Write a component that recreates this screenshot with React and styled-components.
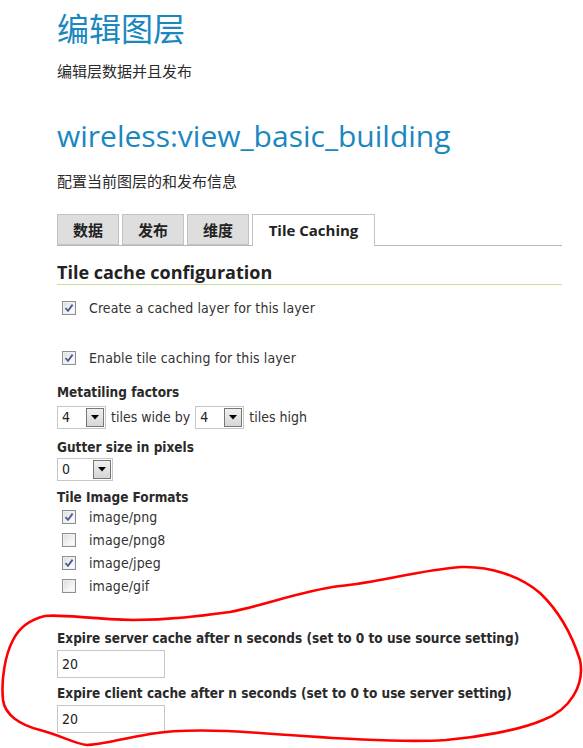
import React from 'react';
import styled, { createGlobalStyle } from 'styled-components';

const GlobalStyle = createGlobalStyle`
  html, body { margin: 0; padding: 0; background: #fff; }
  body {
    font-family: "DejaVu Sans Condensed", "DejaVu Sans", "Noto Sans CJK SC", sans-serif;
    color: #333;
  }
`;

const Page = styled.div`
  position: relative;
  width: 583px;
  height: 748px;
  overflow: hidden;
  box-sizing: border-box;
  padding: 0 21px 0 57px;
`;

const Title = styled.h1`
  margin: 7px 0 0;
  font-family: "Noto Sans CJK SC", sans-serif;
  font-weight: 400;
  font-size: 32px;
  line-height: 40px;
  color: #1a87bf;
`;

const Sub = styled.p`
  margin: ${p => p.$mt}px 0 0;
  font-family: "Noto Sans CJK SC", sans-serif;
  font-size: 15px;
  line-height: 20px;
  color: #2b2b2b;
`;

const LayerName = styled.h2`
  margin: 35px 0 0;
  font-family: "Open Sans", "Noto Sans", sans-serif;
  font-weight: 400;
  font-size: 30px;
  line-height: 40px;
  color: #1a87bf;
`;

const TabBar = styled.div`
  display: flex;
  align-items: flex-start;
  gap: 3px;
  margin-top: 23px;
  height: 31px;
  border-bottom: 1px solid #b9b9b9;
`;

const Tab = styled.div`
  box-sizing: border-box;
  width: ${p => p.$w}px;
  height: ${p => (p.$active ? 32 : 31)}px;
  display: flex;
  align-items: center;
  justify-content: center;
  background: ${p => (p.$active ? '#fff' : '#dedede')};
  border: 1px solid #c3c3c3;
  border-bottom: ${p => (p.$active ? 'none' : '1px solid #c3c3c3')};
  font-family: "Open Sans", "Noto Sans", "Noto Sans CJK SC", sans-serif;
  font-weight: 700;
  font-size: 15px;
  color: #222;
  padding-bottom: ${p => (p.$active ? 1 : 0)}px;
`;

const SectionTitle = styled.h3`
  margin: 15px 0 0;
  font-family: "Open Sans", "Noto Sans", sans-serif;
  font-weight: 700;
  font-size: 18px;
  line-height: 22px;
  padding-bottom: 1px;
  color: #222;
  border-bottom: 1px solid #c6e09c;
`;

const CheckRow = styled.label`
  display: flex;
  align-items: center;
  height: ${p => p.$h || 20}px;
  margin-top: ${p => p.$mt || 0}px;
  padding-left: 5px;
  gap: 13px;
  font-size: 14px;
  letter-spacing: 0.1px;
  color: #333;
`;

const Box = styled.span`
  box-sizing: border-box;
  width: 14px;
  height: 14px;
  flex: none;
  border: 1px solid #8e8f8f;
  background: linear-gradient(135deg, #dcdcdc 0%, #f4f4f4 60%, #fff 100%);
  box-shadow: inset 0 0 0 1px #f0f0f0;
  display: flex;
  align-items: center;
  justify-content: center;
`;

const Check = ({ on }) => (
  <Box>
    {on && (
      <svg width="10" height="10" viewBox="0 0 10 10">
        <path d="M1.5 5.2 L4 7.8 L8.6 1.6" fill="none" stroke="#4b5a9c" strokeWidth="1.8" />
      </svg>
    )}
  </Box>
);

const FieldLabel = styled.div`
  margin-top: ${p => p.$mt}px;
  font-weight: 700;
  font-size: 13.5px;
  line-height: 17px;
  color: #2a2a2a;
`;

const Inline = styled.div`
  display: flex;
  align-items: center;
  gap: 5px;
  margin-top: ${p => p.$mt}px;
  font-size: 14px;
  color: #333;
`;

const SelectBox = styled.div`
  box-sizing: border-box;
  width: ${p => p.$w}px;
  height: 23px;
  border: 1px solid #c6c6c6;
  display: flex;
  align-items: stretch;
  background: #fff;
  font-size: 14px;
  color: #222;
`;

const SelectValue = styled.span`
  flex: 1;
  display: flex;
  align-items: center;
  padding-left: 4px;
`;

const SelectButton = styled.span`
  box-sizing: border-box;
  width: 18px;
  margin: 1px 1px 1px 0;
  border: 1px solid #777;
  background: linear-gradient(#f0f0f0, #d6d6d6);
  display: flex;
  align-items: center;
  justify-content: center;
`;

const Select = ({ w, value }) => (
  <SelectBox $w={w}>
    <SelectValue>{value}</SelectValue>
    <SelectButton>
      <svg width="8" height="5" viewBox="0 0 8 5">
        <path d="M0 0 H8 L4 4.5 Z" fill="#000" />
      </svg>
    </SelectButton>
  </SelectBox>
);

const TextInput = styled.div`
  box-sizing: border-box;
  width: 108px;
  height: 28px;
  margin-top: 2.5px;
  border: 1px solid #c6c6c6;
  padding-left: 4px;
  display: flex;
  align-items: center;
  font-size: 14px;
  color: #222;
`;

const Annotation = styled.svg`
  position: absolute;
  left: 0;
  top: 0;
  pointer-events: none;
`;

export default function App() {
  return (
    <>
      <GlobalStyle />
      <Page>
        <Title>编辑图层</Title>
        <Sub $mt={14}>编辑层数据并且发布</Sub>
        <LayerName>wireless:view_basic_building</LayerName>
        <Sub $mt={15}>配置当前图层的和发布信息</Sub>
        <TabBar>
          <Tab $w={62}>数据</Tab>
          <Tab $w={62}>发布</Tab>
          <Tab $w={62}>维度</Tab>
          <Tab $w={123} $active>Tile Caching</Tab>
        </TabBar>
        <SectionTitle>Tile cache configuration</SectionTitle>
        <CheckRow $mt={12.5}><Check on />Create a cached layer for this layer</CheckRow>
        <CheckRow $mt={30}><Check on />Enable tile caching for this layer</CheckRow>
        <FieldLabel $mt={16}>Metatiling factors</FieldLabel>
        <Inline $mt={5}>
          <Select w={49} value="4" />
          tiles wide by
          <Select w={49} value="4" />
          tiles high
        </Inline>
        <FieldLabel $mt={10}>Gutter size in pixels</FieldLabel>
        <Inline $mt={2}>
          <Select w={56} value="0" />
        </Inline>
        <FieldLabel $mt={8}>Tile Image Formats</FieldLabel>
        <CheckRow $h={23}><Check on />image/png</CheckRow>
        <CheckRow $h={23}><Check />image/png8</CheckRow>
        <CheckRow $h={23}><Check on />image/jpeg</CheckRow>
        <CheckRow $h={23}><Check />image/gif</CheckRow>
        <FieldLabel $mt={32.5}>Expire server cache after n seconds (set to 0 to use source setting)</FieldLabel>
        <TextInput>20</TextInput>
        <FieldLabel $mt={7.5}>Expire client cache after n seconds (set to 0 to use server setting)</FieldLabel>
        <TextInput>20</TextInput>
        <Annotation width="583" height="748" viewBox="0 0 583 748">
          <path
            d="M45 616 C60 614 90 619 133 620 C170 620 200 616 230 612 C270 604 300 591 340 586 C380 582 420 570 461 567 C490 566 520 576 540 593 C560 612 572 635 580 660 C585 685 570 710 543 720 C520 730 480 737 446 740 C400 743 330 738 260 733 C220 730 180 729 150 734 C120 739 100 745 87 745 C75 744 60 735 40 730 C20 725 5 715 3 700 C1 680 5 655 13 640 C18 630 28 620 45 616"
            fill="none"
            stroke="#f00"
            strokeWidth="2.6"
            strokeLinecap="round"
          />
        </Annotation>
      </Page>
    </>
  );
}
